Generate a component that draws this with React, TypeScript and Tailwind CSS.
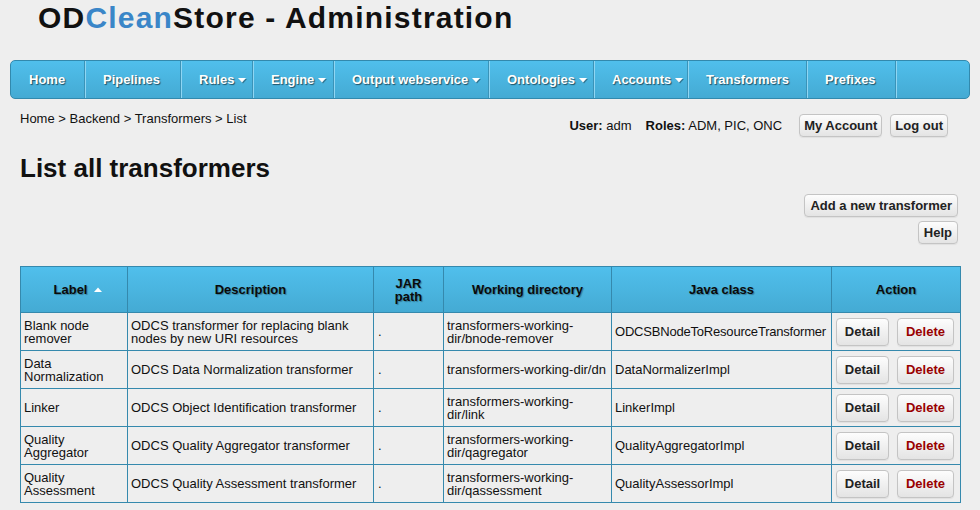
import React from "react";

const navItems: { label: string; w: number; caret?: boolean }[] = [
  { label: "Home", w: 74 },
  { label: "Pipelines", w: 96 },
  { label: "Rules", w: 72, caret: true },
  { label: "Engine", w: 81, caret: true },
  { label: "Output webservice", w: 155, caret: true },
  { label: "Ontologies", w: 105, caret: true },
  { label: "Accounts", w: 94, caret: true },
  { label: "Transformers", w: 119 },
  { label: "Prefixes", w: 89 },
];

const rows = [
  {
    label: "Blank node remover",
    desc: "ODCS transformer for replacing blank nodes by new URI resources",
    dir: "transformers-working-dir/bnode-remover",
    cls: "ODCSBNodeToResourceTransformer",
  },
  {
    label: "Data Normalization",
    desc: "ODCS Data Normalization transformer",
    dir: "transformers-working-dir/dn",
    cls: "DataNormalizerImpl",
  },
  {
    label: "Linker",
    desc: "ODCS Object Identification transformer",
    dir: "transformers-working-dir/link",
    cls: "LinkerImpl",
  },
  {
    label: "Quality Aggregator",
    desc: "ODCS Quality Aggregator transformer",
    dir: "transformers-working-dir/qagregator",
    cls: "QualityAggregatorImpl",
  },
  {
    label: "Quality Assessment",
    desc: "ODCS Quality Assessment transformer",
    dir: "transformers-working-dir/qassessment",
    cls: "QualityAssessorImpl",
  },
];

function Btn({ children, red, className = "" }: { children: React.ReactNode; red?: boolean; className?: string }) {
  return (
    <button
      className={
        "rounded-[4px] border border-[#c4c4c4] bg-gradient-to-b from-[#fdfdfd] to-[#e4e4e4] font-bold text-[13px] leading-[15px] shadow-[0_1px_1px_rgba(0,0,0,0.06)] " +
        (red ? "text-[#990000] " : "text-[#222222] ") +
        className
      }
    >
      {children}
    </button>
  );
}

function Caret() {
  return (
    <svg width="8" height="5" viewBox="0 0 8 5" className="ml-[4px] mt-[2px] drop-shadow-[1px_1px_0_rgba(0,0,0,0.35)]">
      <polygon points="0,0 8,0 4,4.5" fill="#ffffff" />
    </svg>
  );
}

export default function App() {
  return (
    <div
      className="w-[980px] h-[510px] overflow-hidden bg-[#eeeeee] text-[#111111]"
      style={{ fontFamily: '"Liberation Sans", Arial, sans-serif' }}
    >
      <h1 className="ml-[38px] text-[30px] leading-[36px] font-bold tracking-[1.2px] text-[#111111]">
        OD<span className="text-[#3a86c8]">Clean</span>Store - Administration
      </h1>

      <nav className="mt-[24px] mx-[10px] h-[39px] flex rounded-[5px] border border-[#3289ad] bg-gradient-to-b from-[#50bfec] to-[#44aad3] overflow-hidden">
        {navItems.map((it, i) => (
          <div
            key={it.label}
            style={{ width: it.w }}
            className={
              "h-full flex items-center pl-[18px] border-r border-[#3a93b8] text-white font-bold text-[13px] [text-shadow:1px_1px_1px_rgba(0,0,0,0.55)] " +
              (i > 0 ? "shadow-[inset_1px_0_0_#8fd6f3]" : "")
            }
          >
            <span>{it.label}</span>
            {it.caret && <Caret />}
          </div>
        ))}
        <div className="flex-1 h-full shadow-[inset_1px_0_0_#8fd6f3]" />
      </nav>

      <div className="mt-[12px] flex items-start px-[20px]">
        <div className="text-[13px] leading-[16px] text-[#111111]">Home &gt; Backend &gt; Transformers &gt; List</div>
        <div className="ml-auto mr-[12px] mt-[3px] flex items-center text-[13px]">
          <span>
            <b>User:</b> adm
          </span>
          <span className="ml-[14px]">
            <b>Roles:</b> ADM, PIC, ONC
          </span>
          <Btn className="ml-[17px] h-[23px] px-[4px]">My Account</Btn>
          <Btn className="ml-[8px] h-[23px] px-[4px]">Log out</Btn>
        </div>
      </div>

      <h2 className="mt-[16px] ml-[20px] text-[26px] leading-[30px] font-bold text-[#111111]">List all transformers</h2>

      <div className="mt-[11px] mr-[22px] flex flex-col items-end gap-[4px]">
        <Btn className="h-[23px] px-[5px]">Add a new transformer</Btn>
        <Btn className="h-[23px] px-[5px]">Help</Btn>
      </div>

      <table className="mt-[22px] ml-[20px] w-[940px] table-fixed border-collapse text-[13px] leading-[13px]">
        <colgroup>
          <col style={{ width: 107 }} />
          <col style={{ width: 246 }} />
          <col style={{ width: 70 }} />
          <col style={{ width: 168 }} />
          <col style={{ width: 220 }} />
          <col style={{ width: 129 }} />
        </colgroup>
        <thead>
          <tr className="h-[46px] bg-gradient-to-b from-[#50bfec] to-[#44aad3]">
            {["Label", "Description", "JAR path", "Working directory", "Java class", "Action"].map((h, i) => (
              <th
                key={h}
                className={
                  "border border-[#3589ad] px-[10px] text-center font-bold text-[13px] leading-[13px] text-[#0a0a0a] [text-shadow:1px_1px_1px_rgba(0,0,0,0.3)] " +
                  (i === 0 ? "pl-[18px]" : "")
                }
              >
                {i === 0 ? (
                  <span className="inline-flex items-center">
                    Label
                    <svg width="8" height="5" viewBox="0 0 8 5" className="ml-[7px]">
                      <polygon points="0,5 8,5 4,0.5" fill="#ffffff" />
                    </svg>
                  </span>
                ) : (
                  h
                )}
              </th>
            ))}
          </tr>
        </thead>
        <tbody>
          {rows.map((r) => (
            <tr key={r.label} className="h-[38px]">
              <td className="border border-[#3589ad] pl-[3px] pr-[3px] align-middle">{r.label}</td>
              <td className="border border-[#3589ad] pl-[3px] pr-[3px] align-middle">{r.desc}</td>
              <td className="border border-[#3589ad] pl-[4px] pr-[3px] align-middle">.</td>
              <td className="border border-[#3589ad] pl-[3px] pr-[2px] align-middle">{r.dir}</td>
              <td className="border border-[#3589ad] pl-[3px] pr-[2px] align-middle whitespace-nowrap">
                <span className={r.cls.length > 25 ? "tracking-[-0.2px]" : ""}>{r.cls}</span>
              </td>
              <td className="border border-[#3589ad] pl-[4px] pr-[2px] align-middle">
                <div className="flex items-center gap-[8px]">
                  <Btn className="h-[28px] w-[53px]">Detail</Btn>
                  <Btn red className="h-[28px] w-[57px]">Delete</Btn>
                </div>
              </td>
            </tr>
          ))}
        </tbody>
      </table>
    </div>
  );
}
